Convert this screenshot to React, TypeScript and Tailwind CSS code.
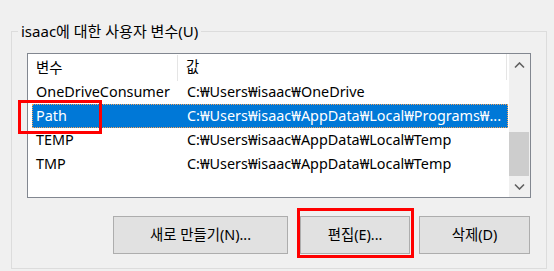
import { ReactNode } from "react";

const rows = [
  { name: "OneDriveConsumer", value: "C:₩Users₩isaac₩OneDrive" },
  { name: "Path", value: "C:₩Users₩isaac₩AppData₩Local₩Programs₩...", selected: true },
  { name: "TEMP", value: "C:₩Users₩isaac₩AppData₩Local₩Temp" },
  { name: "TMP", value: "C:₩Users₩isaac₩AppData₩Local₩Temp" },
];

function Chevron({ down }: { down?: boolean }) {
  return (
    <svg width="11" height="7" viewBox="0 0 11 7">
      <path
        d={down ? "M1 1.5 L5.5 6 L10 1.5" : "M1 5.5 L5.5 1 L10 5.5"}
        fill="none"
        stroke="#606060"
        strokeWidth="1.6"
      />
    </svg>
  );
}

function Button({ children, className }: { children: ReactNode; className: string }) {
  return (
    <div
      className={`h-[38px] border border-[#adadad] bg-[#e1e1e1] flex items-center justify-center text-black ${className}`}
    >
      {children}
    </div>
  );
}

export default function App() {
  return (
    <div
      className="w-[554px] h-[271px] bg-[#f0f0f0] overflow-hidden pt-[31px] pl-[11px] text-[14.4px] text-black"
      style={{ fontFamily: '"Noto Sans", "Noto Sans CJK KR", sans-serif' }}
    >
      {/* group box */}
      <div className="relative w-[536px] h-[238px] border border-[#dcdcdc] pl-[15px] pt-[21px]">
        <span className="absolute -top-[12px] left-[6px] px-[3px] bg-[#f0f0f0] leading-[22px] text-[15px]">
          isaac에 대한 사용자 변수(U)
        </span>

        {/* list view */}
        <div className="w-[504px] h-[145px] border border-[#828790] bg-white flex">
          <div className="flex-1 flex flex-col">
            <div className="h-[26px] flex items-center shrink-0">
              <div className="w-[150px] h-full flex items-center pl-[8px] border-r border-[#e5e5e5] mt-[1px]">
                변수
              </div>
              <div className="w-[329px] h-full flex items-center pl-[8px] border-r border-[#e5e5e5]">
                값
              </div>
            </div>
            {rows.map((r) => (
              <div key={r.name} className="h-[24px] flex items-center pl-[4px] pr-[1px]">
                <div
                  className={`relative flex-1 h-full flex items-center whitespace-nowrap ${
                    r.selected ? "bg-[#0078d7] text-white border border-dotted border-[#f5a35a]" : "border border-transparent"
                  }`}
                >
                  <div className="w-[154px] pl-[3px] shrink-0">{r.name}</div>
                  <div className="overflow-hidden">{r.value}</div>
                  {r.selected && (
                    <div className="absolute -left-[15px] -top-[5px] w-[84px] h-[34px] border-[3px] border-[#ff0000]" />
                  )}
                </div>
              </div>
            ))}
          </div>

          {/* scrollbar */}
          <div className="w-[21px] bg-[#f0f0f0] flex flex-col">
            <div className="h-[22px] flex items-center justify-center">
              <Chevron />
            </div>
            <div className="flex-1 flex flex-col justify-end pr-[1px]">
              <div className="h-[44px] bg-[#cdcdcd]" />
            </div>
            <div className="h-[21px] flex items-center justify-center">
              <Chevron down />
            </div>
          </div>
        </div>

        {/* buttons */}
        <div className="flex mt-[18px]">
          <Button className="w-[175px] ml-[86px]">새로 만들기(N)...</Button>
          <div className="relative ml-[12px]">
            <Button className="w-[110px]">편집(E)...</Button>
            <div className="absolute -left-[3px] -top-[8px] -right-[4px] -bottom-[4px] border-[3px] border-[#ff0000]" />
          </div>
          <Button className="w-[111px] ml-[9px]">삭제(D)</Button>
        </div>
      </div>
    </div>
  );
}
